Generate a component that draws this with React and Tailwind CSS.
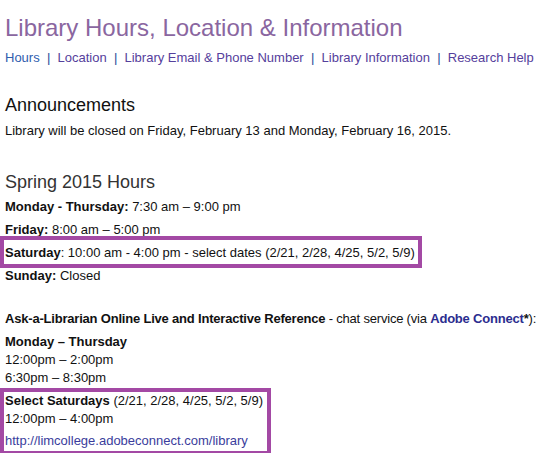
export default function App() {
  const sat = "(2/21, 2/28, 4/25, 5/2, 5/9)";

  return (
    <div className="min-h-screen bg-white px-[5px] text-[13px] text-[#111] [font-family:'Liberation_Sans',Arial,sans-serif]">
      <h1 className="mt-[13px] text-[24px] leading-[30px] text-[#8a66a0]">Library Hours, Location &amp; Information</h1>

      <nav className="mt-[6px] leading-[18px] text-[#55409c]">
        <a className="text-[#2f5dae]">Hours</a>
        <span className="text-[#1d4e9a]">&nbsp; | &nbsp;</span>
        <a>Location</a>
        <span className="text-[#1d4e9a]">&nbsp; | &nbsp;</span>
        <a>Library Email &amp; Phone Number</a>
        <span className="text-[#1d4e9a]">&nbsp; | &nbsp;</span>
        <a>Library Information</a>
        <span className="text-[#1d4e9a]">&nbsp; | &nbsp;</span>
        <a>Research Help</a>
      </nav>

      <h2 className="mt-[27px] text-[18px] leading-[22px] text-[#111]">Announcements</h2>
      <p className="mt-[6px] leading-[18px]">
        Library will be closed on Friday, February 13 and Monday, February 16, 2015.
      </p>

      <h2 className="mt-[31px] text-[18px] leading-[22px] text-[#333]">Spring 2015 Hours</h2>
      <div className="mt-[2px] leading-[23px]">
        <p><b>Monday - Thursday:</b> 7:30 am – 9:00 pm</p>
        <p><b>Friday:</b> 8:00 am – 5:00 pm</p>
        <div>
          <p className="relative inline-block">
            <b>Saturday</b>: 10:00 am - 4:00 pm - select dates {sat}
            <span className="absolute -top-[5px] -bottom-[4px] -left-[5px] -right-[7px] border-4 border-[#a349a4]" />
          </p>
        </div>
        <p><b>Sunday:</b> Closed</p>
      </div>

      <div className="mt-[23px] leading-[18px]">
        <p className="whitespace-nowrap tracking-[-0.2px]">
          <b>Ask-a-Librarian Online Live and Interactive Reference</b> - chat service (via{" "}
          <a className="font-bold text-[#2b2d8f]">Adobe Connect</a><b>*</b>):
        </p>
        <p className="mt-[5px]">
          <b>Monday – Thursday</b>
          <br />
          12:00pm – 2:00pm
          <br />
          6:30pm – 8:30pm
        </p>
        <div className="relative mt-[5px] inline-block">
          <p>
            <b>Select Saturdays</b> {sat}
            <br />
            12:00pm – 4:00pm
          </p>
          <p className="mt-[4px] text-[#3a3d9c]">http://limcollege.adobeconnect.com/library</p>
          <span className="absolute -top-[4px] -bottom-[5px] -left-[5px] -right-[8px] border-4 border-[#a349a4]" />
        </div>
      </div>
    </div>
  );
}
